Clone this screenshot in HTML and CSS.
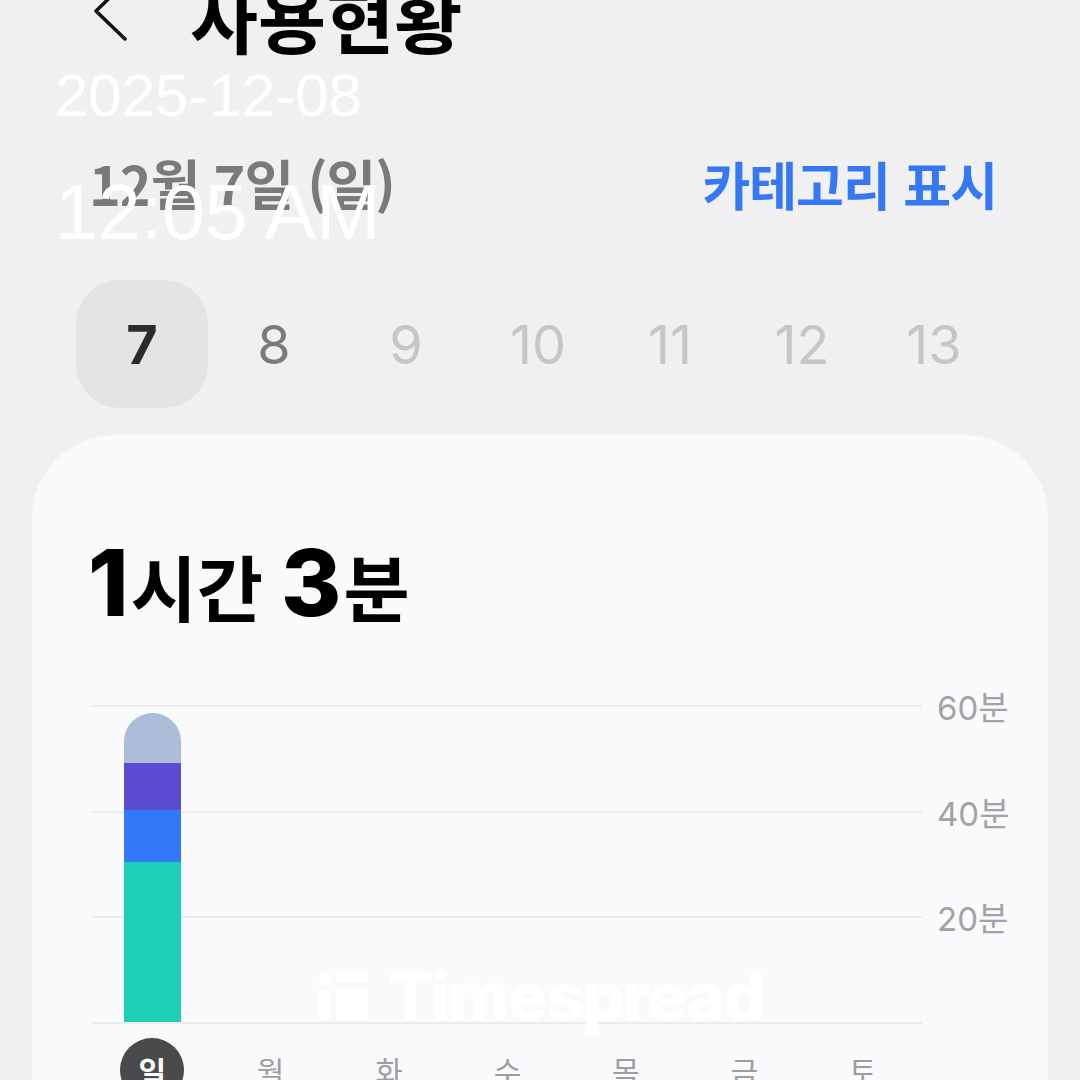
FILE: index.html
```html
<!DOCTYPE html>
<html lang="ko">
<head>
  <meta charset="UTF-8">
  <meta name="viewport" content="width=device-width, initial-scale=1.0">
  <title>사용현황</title>
  <link rel="stylesheet" href="styles.css">
</head>
<body>

  <div class="screen">
    <!-- Top bar -->
    <header class="topbar">
      <svg class="back" viewBox="0 0 40 64" width="40" height="64">
        <polyline points="35,3 6,31 35,59" fill="none" stroke="#111" stroke-width="3.5" stroke-linecap="round" stroke-linejoin="round"/>
      </svg>
      <h1 class="title">사용현황</h1>
    </header>

    <div class="date-row">
      <span class="date-label">12월 7일 (일)</span>
      <span class="category-toggle">카테고리 표시</span>
    </div>

    <!-- Day picker -->
    <div class="day-strip">
      <div class="day selected">7</div>
      <div class="day near">8</div>
      <div class="day">9</div>
      <div class="day">10</div>
      <div class="day">11</div>
      <div class="day">12</div>
      <div class="day">13</div>
    </div>

    <!-- Usage card -->
    <section class="card">
      <div class="total">
        <span class="num">1</span><span class="unit">시간</span>
        <span class="num gap">3</span><span class="unit">분</span>
      </div>

      <div class="chart">
        <div class="plot">
          <div class="grid-lines"><i></i><i></i><i></i><i></i></div>
          <div class="bars">
            <div class="col">
              <div class="bar">
                <span class="seg seg-other" style="height: 50px"></span>
                <span class="seg seg-purple" style="height: 47px"></span>
                <span class="seg seg-blue" style="height: 52px"></span>
                <span class="seg seg-teal" style="height: 160px"></span>
              </div>
            </div>
            <div class="col"></div>
            <div class="col"></div>
            <div class="col"></div>
            <div class="col"></div>
            <div class="col"></div>
            <div class="col"></div>
          </div>
        </div>
        <div class="axis">
          <span>60분</span>
          <span>40분</span>
          <span>20분</span>
          <span></span>
        </div>
        <div class="weekdays">
          <span class="wd active">일</span>
          <span class="wd">월</span>
          <span class="wd">화</span>
          <span class="wd">수</span>
          <span class="wd">목</span>
          <span class="wd">금</span>
          <span class="wd">토</span>
        </div>
      </div>
    </section>
  </div>

  <!-- Capture stamp -->
  <div class="stamp">
    <div class="stamp-date">2025-12-08</div>
    <div class="stamp-time">12:05 AM</div>
  </div>

  <!-- Watermark -->
  <div class="watermark">
    <svg viewBox="0 0 50 48" width="50" height="48">
      <circle cx="7" cy="6.5" r="6.5" fill="#fff"/>
      <rect x="0" y="18" width="13" height="30" fill="#fff"/>
      <rect x="18" y="0" width="32" height="10" fill="#fff"/>
      <rect x="18" y="17" width="32" height="31" fill="#fff"/>
    </svg>
    <span>Timespread</span>
  </div>

</body>
</html>
```

FILE: styles.css
```css
* {
  box-sizing: border-box;
  margin: 0;
  padding: 0;
}
body {
  font-family: Inter, "Noto Sans CJK KR", sans-serif;
  background-color: #f0f0f3;
  width: 1080px;
  height: 1080px;
  overflow: hidden;
  position: relative;
}
.screen {
  display: flex;
  flex-direction: column;
}

/* top bar */
.topbar {
  display: flex;
  align-items: flex-start;
  height: 64px;
  margin-top: -20px;
  padding-left: 90px;
}
.title {
  margin-left: 60px;
  margin-top: -1px;
  font-family: "Noto Sans CJK KR", sans-serif;
  font-size: 74px;
  font-weight: 700;
  line-height: 1;
  color: #000;
}

/* date row */
.date-row {
  display: flex;
  justify-content: space-between;
  align-items: flex-start;
  margin-top: 112px;
  padding: 0 83px 0 89px;
  font-family: "Noto Sans CJK KR", sans-serif;
  line-height: 1;
}
.date-label {
  font-size: 54px;
  font-weight: 700;
  color: #7a7a7c;
  letter-spacing: -1px;
}
.category-toggle {
  margin-top: 2px;
  font-size: 52px;
  font-weight: 700;
  color: #3478f6;
  letter-spacing: -1px;
}

/* day picker */
.day-strip {
  display: flex;
  margin-top: 70px;
  padding-left: 76px;
}
.day {
  width: 132px;
  height: 128px;
  display: flex;
  align-items: center;
  justify-content: center;
  font-size: 54px;
  font-weight: 400;
  color: #c6c6c8;
  border-radius: 44px;
}
.day.near {
  color: #7b7b7d;
}
.day.selected {
  background-color: #e4e4e7;
  color: #2b2b2b;
  font-weight: 700;
}

/* card */
.card {
  margin: 27px 0 0 32px;
  width: 1016px;
  height: 700px;
  background-color: #fafafc;
  border-radius: 84px 84px 0 0;
  padding: 102px 40px 0 56px;
}
.total {
  display: flex;
  align-items: baseline;
  line-height: 1;
  color: #000;
}
.total .num {
  font-family: Inter, sans-serif;
  font-size: 92px;
  font-weight: 800;
  letter-spacing: -2px;
}
.total .num.gap {
  margin-left: 18px;
}
.total .unit {
  margin-left: 4px;
  font-family: "Noto Sans CJK KR", sans-serif;
  font-size: 72px;
  font-weight: 700;
}

/* chart */
.chart {
  display: grid;
  grid-template-columns: 829px 1fr;
  grid-template-rows: 319px auto;
  column-gap: 15px;
  margin-top: 76px;
  padding-left: 5px;
}
.plot {
  display: grid;
}
.grid-lines,
.bars {
  grid-area: 1 / 1;
}
.grid-lines {
  display: flex;
  flex-direction: column;
  justify-content: space-between;
}
.grid-lines i {
  display: block;
  height: 2px;
  background-color: #ececef;
}
.bars {
  display: grid;
  grid-template-columns: repeat(7, 1fr);
  align-items: end;
  padding-bottom: 2px;
}
.col {
  display: flex;
  justify-content: center;
}
.bar {
  width: 57px;
  display: flex;
  flex-direction: column;
  border-radius: 29px 29px 0 0;
  overflow: hidden;
}
.seg {
  display: block;
}
.seg-other { background-color: #abbdd9; }
.seg-purple { background-color: #5b4bd0; }
.seg-blue { background-color: #3478fa; }
.seg-teal { background-color: #1ecfb7; }

.axis {
  display: flex;
  flex-direction: column;
  justify-content: space-between;
}
.axis span {
  height: 2px;
  display: flex;
  align-items: center;
  font-size: 33px;
  color: #a3a3a6;
  white-space: nowrap;
}

.weekdays {
  display: grid;
  grid-template-columns: repeat(7, 1fr);
  justify-items: center;
  margin-top: 14px;
}
.wd {
  width: 64px;
  height: 64px;
  display: flex;
  align-items: center;
  justify-content: center;
  font-family: "Noto Sans CJK KR", sans-serif;
  font-size: 30px;
  color: #9d9d9f;
  border-radius: 50%;
}
.wd.active {
  background-color: #4a4a4c;
  color: #fff;
  font-weight: 700;
}

/* overlays */
.stamp {
  position: absolute;
  left: 55px;
  top: 66px;
  font-family: "Liberation Sans", Arial, sans-serif;
  color: #fff;
  line-height: 1;
}
.stamp-date {
  font-size: 60px;
}
.stamp-time {
  margin-top: 48px;
  font-size: 77px;
}
.watermark {
  position: absolute;
  left: 318px;
  top: 963px;
  display: flex;
  align-items: center;
  gap: 20px;
  color: #fff;
}
.watermark span {
  font-family: Inter, sans-serif;
  font-size: 66px;
  font-weight: 800;
  line-height: 1;
  letter-spacing: -1.5px;
}
```
